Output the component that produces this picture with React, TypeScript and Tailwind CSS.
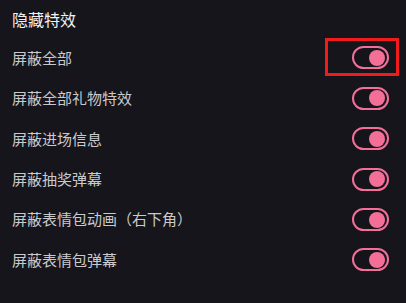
import { useState } from "react";

const items = [
    "屏蔽全部",
    "屏蔽全部礼物特效",
    "屏蔽进场信息",
    "屏蔽抽奖弹幕",
    "屏蔽表情包动画（右下角）",
    "屏蔽表情包弹幕",
];

function Toggle({ on, onClick }: { on: boolean; onClick: () => void }) {
    return (
        <button
            type="button"
            onClick={onClick}
            className={`relative w-[37px] h-[23px] rounded-full border-2 border-[#f46f98] bg-[#15141b] flex items-center px-[2px] ${
                on ? "justify-end" : "justify-start"
            }`}
        >
            <span className="block w-[16px] h-[16px] rounded-full bg-[#f46f98]" />
        </button>
    );
}

export default function App() {
    const [state, setState] = useState(items.map(() => true));

    return (
        <div
            className="w-[406px] h-[303px] bg-[#16151c] pl-[12px] pr-[17px] overflow-hidden"
            style={{ fontFamily: '"Noto Sans CJK SC", "Noto Sans", sans-serif' }}
        >
            <div className="h-[37.8px] flex items-center text-[16px] text-[#f2f2f2]">隐藏特效</div>
            {items.map((label, i) => (
                <div key={label} className="h-[40.4px] flex items-center justify-between">
                    <span className="text-[15px] text-[#cacacd]">{label}</span>
                    <div className="relative">
                        <Toggle
                            on={state[i]}
                            onClick={() => setState((s) => s.map((v, j) => (j === i ? !v : v)))}
                        />
                        {i === 0 && (
                            <div className="absolute -left-[27px] -right-[10px] -top-[8px] -bottom-[7px] border-[3px] border-[#f21b1b] pointer-events-none" />
                        )}
                    </div>
                </div>
            ))}
        </div>
    );
}
